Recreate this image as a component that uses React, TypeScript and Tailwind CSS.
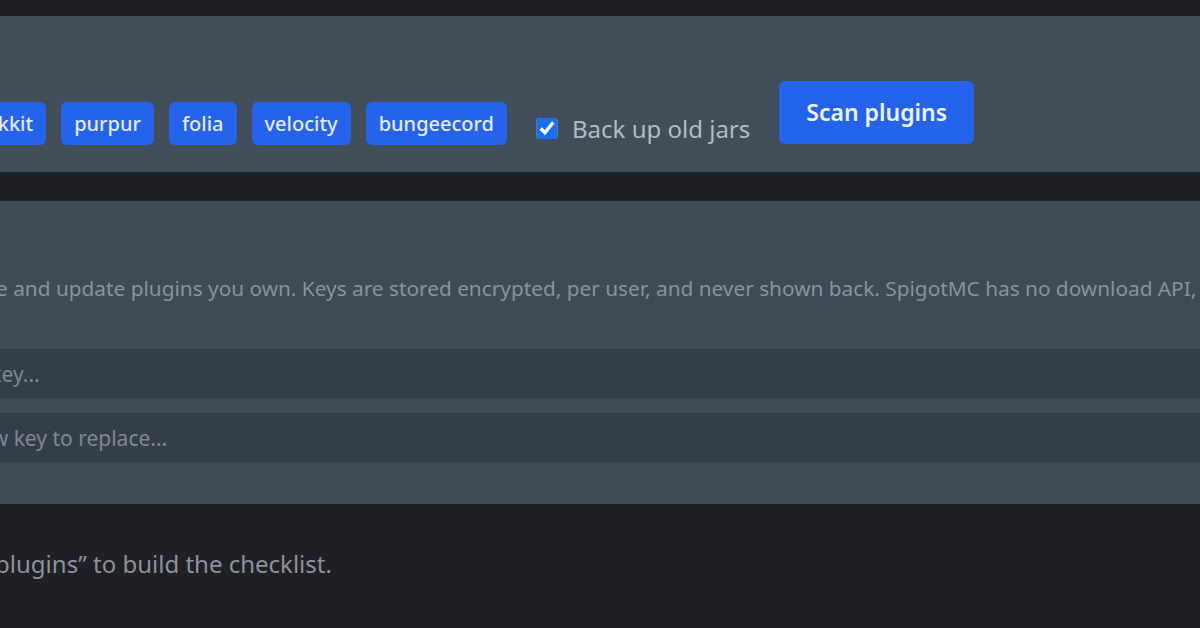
import { useState } from "react";

const loaders = ["paper", "spigot", "bukkit", "purpur", "folia", "velocity", "bungeecord"];

export default function App() {
  const [backup, setBackup] = useState(true);

  return (
    <div
      className="h-[628px] w-[1200px] overflow-hidden bg-[#1f1f26] pt-4"
      style={{ fontFamily: '"Noto Sans", "Open Sans", sans-serif' }}
    >
      {/* Scan toolbar */}
      <section className="flex h-[156px] items-end bg-[#414d59] pb-[27px]">
        <div className="flex items-end gap-[29px]">
          {/* loader filter chips, right-aligned so the row ends next to the checkbox */}
          <div className="flex w-[507px] shrink-0 justify-end gap-[15px]">
            {loaders.map((l) => (
              <span
                key={l}
                className="flex h-[43px] shrink-0 items-center rounded-md bg-[#2563eb] px-[13px] text-[20px] font-medium text-[#e3eafb]"
              >
                {l}
              </span>
            ))}
          </div>

          <label className="mb-[6px] flex h-[21px] shrink-0 items-center gap-[14px] text-[24px] text-[#b4bac1]">
            <input
              type="checkbox"
              checked={backup}
              onChange={(e) => setBackup(e.target.checked)}
              className="h-[21px] w-[22px] accent-[#1c6ef0]"
            />
            Back up old jars
          </label>

          <button className="mb-px h-[63px] shrink-0 rounded-md bg-[#2563eb] px-[27px] text-[23px] font-semibold text-[#eef3fd]">
            Scan plugins
          </button>
        </div>
      </section>

      {/* API keys */}
      <section className="mt-[29px] flex h-[303px] flex-col bg-[#3e4a56] pt-[73px]">
        <p className="-ml-[382px] whitespace-nowrap text-[20.8px] leading-7 text-[#8a929b]">
          Add API keys so the updater can resolve and update plugins you own. Keys are stored encrypted, per user, and never shown back. SpigotMC has no download API, so those plugins are matched by name only.
        </p>
        <div className="mt-[47px] flex flex-col gap-[15px]">
          <input
            type="password"
            placeholder="Paste your Polymart API key..."
            className="-ml-[269px] h-[49px] w-[1600px] border-t border-[#2f3945] bg-[#333e4a] px-4 text-[21px] text-[#c8ced5] outline-none placeholder:text-[#7f8892]"
          />
          <input
            type="password"
            placeholder="Modrinth: paste a new key to replace..."
            className="-ml-[229px] h-[49px] w-[1600px] border-t border-[#2f3945] bg-[#333e4a] px-4 text-[21px] text-[#c8ced5] outline-none placeholder:text-[#7f8892]"
          />
        </div>
      </section>

      {/* Empty checklist hint */}
      <p className="-ml-[407px] mt-[44px] whitespace-nowrap text-[24px] leading-8 text-[#8e929a]">
        No plugins scanned yet. Click “Scan plugins” to build the checklist.
      </p>
    </div>
  );
}
